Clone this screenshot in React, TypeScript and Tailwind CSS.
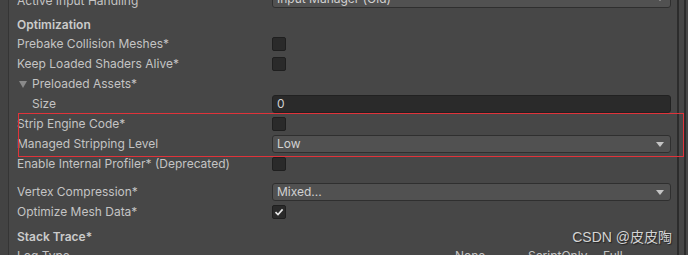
import { ReactNode } from 'react';

const font = { fontFamily: 'Inter, "Noto Sans", "Noto Sans CJK SC", sans-serif' };

function Checkbox({ checked = false }: { checked?: boolean }) {
  return (
    <div className="w-[14px] h-[14px] rounded-[2px] bg-[#2a2a2a] border border-[#1f1f1f] flex items-center justify-center">
      {checked && (
        <svg width="10" height="10" viewBox="0 0 10 10">
          <path d="M1.5 5.2 L4 7.6 L8.6 2.4" stroke="#e8e8e8" strokeWidth="1.6" fill="none" />
        </svg>
      )}
    </div>
  );
}

function Dropdown({ value }: { value: string }) {
  return (
    <div className="h-[18px] w-full rounded-[3px] bg-[#515151] border border-[#2f2f2f] flex items-center justify-between pl-[4px] pr-[6px] text-[#d2d2d2]">
      <span>{value}</span>
      <svg width="8" height="5" viewBox="0 0 8 5">
        <path d="M0 0 L8 0 L4 5 Z" fill="#c4c4c4" />
      </svg>
    </div>
  );
}

function Row({ label, indent = 0, children }: { label: ReactNode; indent?: number; children?: ReactNode }) {
  return (
    <div className="h-[20px] shrink-0 flex items-center">
      <div className="w-[255px] shrink-0 flex items-center" style={{ paddingLeft: indent }}>
        {label}
      </div>
      <div className="flex-1 flex items-center pr-[6px]">{children}</div>
    </div>
  );
}

export default function App() {
  return (
    <div
      className="relative w-[688px] h-[255px] overflow-hidden bg-[#474747] text-[12px] text-[#c4c4c4] flex"
      style={font}
    >
      <div className="w-[9px] shrink-0 bg-[#434343] border-r border-[#353535]" />

      <div className="flex-1 flex flex-col mt-[-9px] pl-[8px]">
        <Row label="Active Input Handling">
          <div className="mt-[-5px] w-full">
            <Dropdown value="Input Manager (Old)" />
          </div>
        </Row>
        <div className="h-[4px] shrink-0" />
        <div className="h-[19px] shrink-0 flex items-center font-semibold text-[#cbcbcb]">Optimization</div>
        <Row label="Prebake Collision Meshes*">
          <Checkbox />
        </Row>
        <Row label="Keep Loaded Shaders Alive*">
          <Checkbox />
        </Row>
        <Row
          label={
            <span className="flex items-center">
              <svg width="8" height="7" viewBox="0 0 8 7" className="ml-[2px] mr-[5px]">
                <path d="M0 0 L8 0 L4 7 Z" fill="#8a8a8a" />
              </svg>
              Preloaded Assets*
            </span>
          }
        />
        <Row label="Size" indent={15}>
          <div className="h-[18px] w-full rounded-[3px] bg-[#2a2a2a] border border-[#212121] flex items-center pl-[4px] text-[#d2d2d2]">
            0
          </div>
        </Row>
        <Row label="Strip Engine Code*">
          <Checkbox />
        </Row>
        <Row label="Managed Stripping Level">
          <Dropdown value="Low" />
        </Row>
        <Row label="Enable Internal Profiler* (Deprecated)">
          <Checkbox />
        </Row>
        <div className="h-[8px] shrink-0" />
        <Row label="Vertex Compression*">
          <Dropdown value="Mixed..." />
        </Row>
        <Row label="Optimize Mesh Data*">
          <Checkbox checked />
        </Row>
        <div className="h-[6px] shrink-0" />
        <div className="h-[18px] shrink-0 flex items-center font-semibold text-[#cbcbcb]">Stack Trace*</div>
        <div className="h-[20px] shrink-0 flex items-center">
          <span className="w-[438px] shrink-0">Log Type</span>
          <span className="w-[73px] shrink-0">None</span>
          <span className="w-[75px] shrink-0">ScriptOnly</span>
          <span>Full</span>
        </div>
      </div>

      <div className="w-[2px] shrink-0 bg-[#2c2c2c]" />
      <div className="w-[5px] shrink-0 bg-[#474747]" />
      <div className="w-[2px] shrink-0 bg-[#2c2c2c]" />
      <div className="w-[2px] shrink-0 bg-[#474747]" />

      <div className="absolute left-[18px] top-[113px] w-[666px] h-[44px] border border-[#e0333a] pointer-events-none" />

      <div
        className="absolute right-[16px] top-[227px] text-[14px] leading-[20px] text-[#d4d4d4]"
        style={{ fontFamily: '"Liberation Sans", "Noto Sans CJK SC", sans-serif', textShadow: '1px 1px 1px #222' }}
      >
        CSDN @皮皮陶
      </div>
    </div>
  );
}
